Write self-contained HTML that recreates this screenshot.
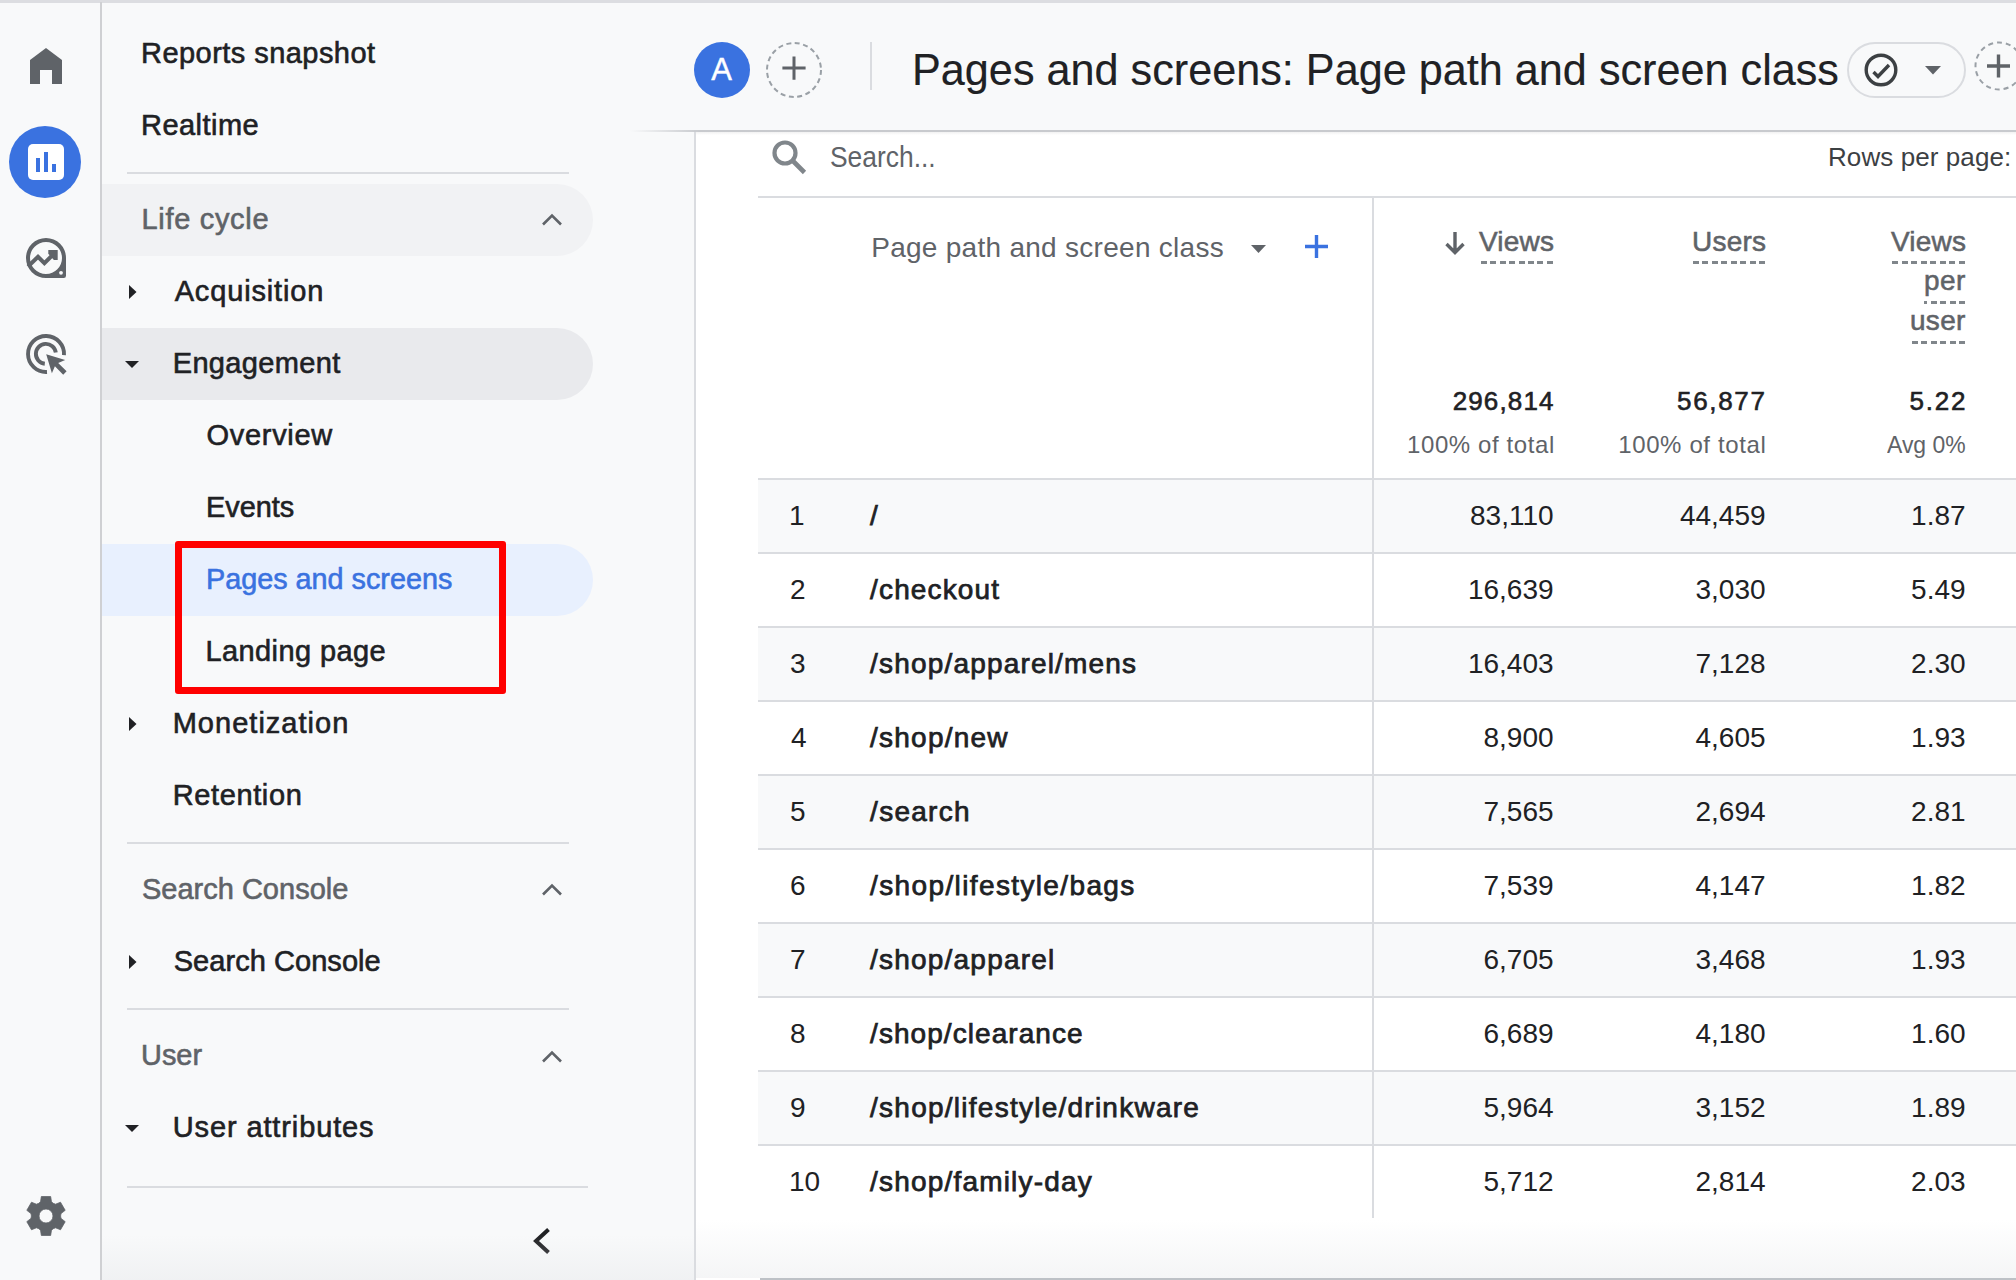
<!DOCTYPE html>
<html><head><meta charset="utf-8"><style>
html,body{margin:0;padding:0;width:2016px;height:1280px;overflow:hidden;background:#f8f9fa;}
.t{position:absolute;white-space:nowrap;font-family:"Liberation Sans", sans-serif;}
.b{position:absolute;}
</style></head><body>
<div class="b" style="left:0px;top:0px;width:2016px;height:1280px;background:#f8f9fa"></div>
<div class="b" style="left:696px;top:131px;width:1320px;height:1149px;background:#fff"></div>
<div class="b" style="left:694px;top:131px;width:2px;height:1149px;background:#dadce0"></div>
<div class="b" style="left:630px;top:130px;width:1386px;height:2px;background:linear-gradient(90deg,rgba(200,202,206,0) 0px,rgba(200,202,206,1) 70px)"></div>
<div class="b" style="left:696px;top:132px;width:1320px;height:3px;background:linear-gradient(180deg,rgba(60,64,67,0.07),rgba(60,64,67,0))"></div>
<div class="b" style="left:0px;top:0px;width:2016px;height:2.5px;background:#dcdde1"></div>
<div class="b" style="left:100px;top:2px;width:2px;height:1278px;background:#cfd0d3"></div>
<div class="b" style="left:102px;top:184px;width:491px;height:72px;background:#f1f2f4;border-radius:0 36px 36px 0"></div>
<div class="b" style="left:102px;top:328px;width:491px;height:72px;background:#e9eaed;border-radius:0 36px 36px 0"></div>
<div class="b" style="left:102px;top:544px;width:491px;height:72px;background:#e8f0fe;border-radius:0 36px 36px 0"></div>
<div class="b" style="left:127px;top:172px;width:442px;height:2px;background:#dadce0"></div>
<div class="b" style="left:127px;top:842px;width:442px;height:2px;background:#dadce0"></div>
<div class="b" style="left:127px;top:1008px;width:442px;height:2px;background:#dadce0"></div>
<div class="b" style="left:127px;top:1186px;width:461px;height:2px;background:#dadce0"></div>
<div class="t" style="left:141.00px;top:35.33px;font-size:29px;line-height:36.25px;font-weight:400;color:#202124;letter-spacing:0.451px;-webkit-text-stroke:0.6px #202124;">Reports snapshot</div>
<div class="t" style="left:141.00px;top:107.33px;font-size:29px;line-height:36.25px;font-weight:400;color:#202124;letter-spacing:0.471px;-webkit-text-stroke:0.6px #202124;">Realtime</div>
<div class="t" style="left:141.50px;top:200.83px;font-size:29px;line-height:36.25px;font-weight:400;color:#5f6368;letter-spacing:0.683px;-webkit-text-stroke:0.6px #5f6368;">Life cycle</div>
<div class="t" style="left:174.70px;top:272.83px;font-size:29px;line-height:36.25px;font-weight:400;color:#202124;letter-spacing:0.839px;-webkit-text-stroke:0.6px #202124;">Acquisition</div>
<div class="t" style="left:172.70px;top:344.83px;font-size:29px;line-height:36.25px;font-weight:400;color:#202124;letter-spacing:0.356px;-webkit-text-stroke:0.6px #202124;">Engagement</div>
<div class="t" style="left:206.60px;top:416.83px;font-size:29px;line-height:36.25px;font-weight:400;color:#202124;letter-spacing:0.684px;-webkit-text-stroke:0.6px #202124;">Overview</div>
<div class="t" style="left:205.61px;top:488.83px;font-size:29px;line-height:36.25px;font-weight:400;color:#202124;-webkit-text-stroke:0.6px #202124;transform:scaleX(0.9959);transform-origin:0 0;">Events</div>
<div class="t" style="left:205.62px;top:560.83px;font-size:29px;line-height:36.25px;font-weight:400;color:#3a72e0;-webkit-text-stroke:0.6px #3a72e0;transform:scaleX(0.9920);transform-origin:0 0;">Pages and screens</div>
<div class="t" style="left:205.60px;top:632.83px;font-size:29px;line-height:36.25px;font-weight:400;color:#202124;letter-spacing:0.377px;-webkit-text-stroke:0.6px #202124;">Landing page</div>
<div class="t" style="left:172.70px;top:704.83px;font-size:29px;line-height:36.25px;font-weight:400;color:#202124;letter-spacing:1.018px;-webkit-text-stroke:0.6px #202124;">Monetization</div>
<div class="t" style="left:172.70px;top:776.83px;font-size:29px;line-height:36.25px;font-weight:400;color:#202124;letter-spacing:0.623px;-webkit-text-stroke:0.6px #202124;">Retention</div>
<div class="t" style="left:142.00px;top:870.83px;font-size:29px;line-height:36.25px;font-weight:400;color:#5f6368;-webkit-text-stroke:0.6px #5f6368;transform:scaleX(0.9999);transform-origin:0 0;">Search Console</div>
<div class="t" style="left:173.70px;top:942.83px;font-size:29px;line-height:36.25px;font-weight:400;color:#202124;letter-spacing:0.053px;-webkit-text-stroke:0.6px #202124;">Search Console</div>
<div class="t" style="left:141.01px;top:1036.83px;font-size:29px;line-height:36.25px;font-weight:400;color:#5f6368;-webkit-text-stroke:0.6px #5f6368;transform:scaleX(0.9971);transform-origin:0 0;">User</div>
<div class="t" style="left:172.70px;top:1108.83px;font-size:29px;line-height:36.25px;font-weight:400;color:#202124;letter-spacing:0.881px;-webkit-text-stroke:0.6px #202124;">User attributes</div>
<svg class="b" style="left:129px;top:285px" width="8" height="14" viewBox="0 0 8 14"><path d="M0 0L7.5 7L0 14Z" fill="#202124"/></svg>
<svg class="b" style="left:125px;top:361px" width="14" height="7" viewBox="0 0 14 7"><path d="M0 0L14 0L7.0 7Z" fill="#202124"/></svg>
<svg class="b" style="left:129px;top:717px" width="8" height="14" viewBox="0 0 8 14"><path d="M0 0L7.5 7L0 14Z" fill="#202124"/></svg>
<svg class="b" style="left:129px;top:955px" width="8" height="14" viewBox="0 0 8 14"><path d="M0 0L7.5 7L0 14Z" fill="#202124"/></svg>
<svg class="b" style="left:125px;top:1125px" width="14" height="7" viewBox="0 0 14 7"><path d="M0 0L14 0L7.0 7Z" fill="#202124"/></svg>
<svg class="b" style="left:541px;top:212px" width="22" height="14" viewBox="0 0 22 14"><path d="M2 12.5L11 3.5L20 12.5" fill="none" stroke="#5f6368" stroke-width="2.6"/></svg>
<svg class="b" style="left:541px;top:882px" width="22" height="14" viewBox="0 0 22 14"><path d="M2 12.5L11 3.5L20 12.5" fill="none" stroke="#5f6368" stroke-width="2.6"/></svg>
<svg class="b" style="left:541px;top:1049px" width="22" height="14" viewBox="0 0 22 14"><path d="M2 12.5L11 3.5L20 12.5" fill="none" stroke="#5f6368" stroke-width="2.6"/></svg>
<svg class="b" style="left:530px;top:1225px" width="24" height="32" viewBox="0 0 24 32"><path d="M18.5 4.5L6 16L18.5 27.5" fill="none" stroke="#202124" stroke-width="4"/></svg>
<div class="b" style="left:175px;top:541px;width:331px;height:153px;border:7px solid #f00;box-sizing:border-box;border-radius:3px"></div>
<svg class="b" style="left:30px;top:48px" width="32" height="36" viewBox="0 0 32 36"><path d="M16 0L32 12V36H22V22H10V36H0V12Z" fill="#5f6368"/></svg>
<div class="b" style="left:9px;top:126px;width:72px;height:72px;border-radius:50%;background:#3a72e0"></div>
<div class="b" style="left:28px;top:144px;width:36px;height:36px;background:#fff;border-radius:5px"></div>
<div class="b" style="left:36px;top:158px;width:4px;height:13.5px;background:#3a72e0"></div>
<div class="b" style="left:44px;top:152px;width:4px;height:19.5px;background:#3a72e0"></div>
<div class="b" style="left:52px;top:164px;width:4px;height:7.5px;background:#3a72e0"></div>
<svg class="b" style="left:16px;top:228px" width="60" height="60" viewBox="0 0 60 60">
<path fill-rule="evenodd" d="M30 10A20 20 0 1 0 30 50H47.8A2.2 2.2 0 0 0 50 47.8V30A20 20 0 0 0 30 10ZM30 14A16 16 0 1 1 30 46A16 16 0 1 1 30 14Z" fill="#5f6368"/>
<circle cx="45" cy="44.8" r="1.9" fill="#f8f9fa"/>
<path d="M12 38.5L22 28.8L28.4 35.2L38.6 25" fill="none" stroke="#5f6368" stroke-width="4" stroke-linejoin="miter"/>
<path d="M32.3 22H41.7V31.9H37.9L32.3 25.7Z" fill="#5f6368"/>
</svg>
<svg class="b" style="left:16px;top:324px" width="60" height="60" viewBox="0 0 60 60">
<path d="M31 48A18 18 0 1 1 48 31.2" fill="none" stroke="#5f6368" stroke-width="3.9"/>
<path d="M28.8 39.8A10 10 0 1 1 39.8 28.6" fill="none" stroke="#5f6368" stroke-width="3.9"/>
<path d="M30.2 30.2L49.2 35.9L42.2 38.9L50.6 47.3L47.2 50.7L38.9 42.2L35.9 49.2Z" fill="#5f6368"/>
</svg>
<svg class="b" style="left:26px;top:1196px" width="40" height="40" viewBox="0 0 40 40">
<path fill-rule="evenodd" stroke="#5f6368" stroke-width="0.8" stroke-linejoin="round" d="M12.70 7.36 L14.55 5.81 L15.33 0.55 L24.67 0.55 L25.45 5.81 L27.30 7.36 L29.57 8.19 L34.51 6.23 L39.18 14.32 L35.01 17.62 L34.60 20.00 L35.01 22.38 L39.18 25.68 L34.51 33.77 L29.57 31.81 L27.30 32.64 L25.45 34.19 L24.67 39.45 L15.33 39.45 L14.55 34.19 L12.70 32.64 L10.43 31.81 L5.49 33.77 L0.82 25.68 L4.99 22.38 L5.40 20.00 L4.99 17.62 L0.82 14.32 L5.49 6.23 L10.43 8.19Z M27 20A7 7 0 1 0 13 20A7 7 0 1 0 27 20Z" fill="#5f6368"/>
</svg>
<div class="b" style="left:694px;top:42px;width:56px;height:56px;border-radius:50%;background:#3a72e0"></div>
<div class="t" style="left:711.30px;top:50.88px;font-size:31px;line-height:38.75px;font-weight:400;color:#fff;-webkit-text-stroke:0.4px #fff;">A</div>
<svg class="b" style="left:765px;top:41px" width="58" height="58" viewBox="0 0 58 58">
<circle cx="29" cy="29" r="27" fill="none" stroke="#9aa0a6" stroke-width="2" stroke-dasharray="5 3.5"/>
<path d="M29 15.5V38.7M17.4 27H40.6" stroke="#5f6368" stroke-width="3"/></svg>
<div class="b" style="left:870px;top:42px;width:2px;height:48px;background:#dadce0"></div>
<div class="t" style="left:911.55px;top:42.25px;font-size:44px;line-height:55.0px;font-weight:400;color:#202124;-webkit-text-stroke:0.15px #202124;transform:scaleX(0.9818);transform-origin:0 0;">Pages and screens: Page path and screen class</div>
<div class="b" style="left:1847px;top:42px;width:119px;height:56px;border:2px solid #dadce0;border-radius:28px;box-sizing:border-box"></div>
<svg class="b" style="left:1862px;top:51px" width="38" height="38" viewBox="0 0 38 38">
<circle cx="19" cy="19" r="14.8" fill="none" stroke="#3c4043" stroke-width="3.4"/>
<path d="M11.5 21L16 25.5L27 14" fill="none" stroke="#3c4043" stroke-width="3.4"/></svg>
<svg class="b" style="left:1925px;top:66px" width="16" height="8.5" viewBox="0 0 16 8.5"><path d="M0 0L16 0L8.0 8.5Z" fill="#5f6368"/></svg>
<svg class="b" style="left:1974px;top:41px" width="50" height="50" viewBox="0 0 50 50">
<circle cx="25" cy="25" r="23.5" fill="none" stroke="#9aa0a6" stroke-width="2" stroke-dasharray="5 4"/>
<path d="M24.5 13.5V36.5M13 25H36" stroke="#5f6368" stroke-width="3.4"/></svg>
<svg class="b" style="left:770px;top:138px" width="38" height="38" viewBox="0 0 38 38">
<circle cx="15" cy="15" r="10.5" fill="none" stroke="#80868b" stroke-width="4.2"/>
<path d="M22.5 22.5L34.5 34.5" stroke="#80868b" stroke-width="4.6"/></svg>
<div class="t" style="left:830.19px;top:138.83px;font-size:29px;line-height:36.25px;font-weight:400;color:#5f6368;transform:scaleX(0.9106);transform-origin:0 0;">Search...</div>
<div class="t" style="left:1828.00px;top:140.54px;font-size:26px;line-height:32.5px;font-weight:400;color:#3c4043;letter-spacing:0.086px;">Rows per page:</div>
<div class="b" style="left:758px;top:196px;width:1258px;height:2px;background:#dadce0"></div>
<div class="b" style="left:758px;top:480px;width:1258px;height:72px;background:#f8f9fa"></div>
<div class="b" style="left:758px;top:478px;width:1258px;height:2px;background:#dadce0"></div>
<div class="b" style="left:758px;top:552px;width:1258px;height:2px;background:#dadce0"></div>
<div class="b" style="left:758px;top:628px;width:1258px;height:72px;background:#f8f9fa"></div>
<div class="b" style="left:758px;top:626px;width:1258px;height:2px;background:#dadce0"></div>
<div class="b" style="left:758px;top:700px;width:1258px;height:2px;background:#dadce0"></div>
<div class="b" style="left:758px;top:776px;width:1258px;height:72px;background:#f8f9fa"></div>
<div class="b" style="left:758px;top:774px;width:1258px;height:2px;background:#dadce0"></div>
<div class="b" style="left:758px;top:848px;width:1258px;height:2px;background:#dadce0"></div>
<div class="b" style="left:758px;top:924px;width:1258px;height:72px;background:#f8f9fa"></div>
<div class="b" style="left:758px;top:922px;width:1258px;height:2px;background:#dadce0"></div>
<div class="b" style="left:758px;top:996px;width:1258px;height:2px;background:#dadce0"></div>
<div class="b" style="left:758px;top:1072px;width:1258px;height:72px;background:#f8f9fa"></div>
<div class="b" style="left:758px;top:1070px;width:1258px;height:2px;background:#dadce0"></div>
<div class="b" style="left:758px;top:1144px;width:1258px;height:2px;background:#dadce0"></div>
<div class="b" style="left:1372px;top:197px;width:2px;height:1021px;background:#dadce0"></div>
<div class="t" style="left:871.20px;top:229.80px;font-size:28px;line-height:35.0px;font-weight:400;color:#5f6368;letter-spacing:0.278px;">Page path and screen class</div>
<svg class="b" style="left:1251px;top:245px" width="15" height="8" viewBox="0 0 15 8"><path d="M0 0L15 0L7.5 8Z" fill="#5f6368"/></svg>
<svg class="b" style="left:1305px;top:234.5px" width="23" height="23" viewBox="0 0 23 23"><path d="M11.5 0V23M0 11.5H23" stroke="#3a72e0" stroke-width="3.4"/></svg>
<svg class="b" style="left:1444px;top:231px" width="22" height="24" viewBox="0 0 22 24"><path d="M11 1V21M2.5 13L11 21.5L19.5 13" fill="none" stroke="#5f6368" stroke-width="3.4"/></svg>
<div class="t" style="left:1479.00px;top:223.50px;font-size:28px;line-height:35.0px;font-weight:400;color:#5f6368;letter-spacing:0.204px;-webkit-text-stroke:0.55px #5f6368;">Views</div>
<div class="b" style="left:1478px;top:261.2px;width:75px;height:3px;background:repeating-linear-gradient(270deg,#80868b 0 6px,transparent 6px 9.5px)"></div>
<div class="t" style="left:1692.00px;top:223.50px;font-size:28px;line-height:35.0px;font-weight:400;color:#5f6368;letter-spacing:0.221px;-webkit-text-stroke:0.55px #5f6368;">Users</div>
<div class="b" style="left:1693px;top:261.2px;width:72px;height:3px;background:repeating-linear-gradient(270deg,#80868b 0 6px,transparent 6px 9.5px)"></div>
<div class="t" style="left:1891.00px;top:223.50px;font-size:28px;line-height:35.0px;font-weight:400;color:#5f6368;letter-spacing:0.204px;-webkit-text-stroke:0.55px #5f6368;">Views</div>
<div class="b" style="left:1890px;top:261.2px;width:75px;height:3px;background:repeating-linear-gradient(270deg,#80868b 0 6px,transparent 6px 9.5px)"></div>
<div class="t" style="left:1924.00px;top:263.30px;font-size:28px;line-height:35.0px;font-weight:400;color:#5f6368;letter-spacing:0.428px;-webkit-text-stroke:0.55px #5f6368;">per</div>
<div class="b" style="left:1924px;top:301.0px;width:41px;height:3px;background:repeating-linear-gradient(270deg,#80868b 0 6px,transparent 6px 9.5px)"></div>
<div class="t" style="left:1910.00px;top:303.30px;font-size:28px;line-height:35.0px;font-weight:400;color:#5f6368;letter-spacing:0.285px;-webkit-text-stroke:0.55px #5f6368;">user</div>
<div class="b" style="left:1910px;top:341.0px;width:55px;height:3px;background:repeating-linear-gradient(270deg,#80868b 0 6px,transparent 6px 9.5px)"></div>
<div class="t" style="left:1452.70px;top:385.14px;font-size:26px;line-height:32.5px;font-weight:400;color:#202124;letter-spacing:1.129px;-webkit-text-stroke:0.6px #202124;">296,814</div>
<div class="t" style="left:1677.00px;top:385.14px;font-size:26px;line-height:32.5px;font-weight:400;color:#202124;letter-spacing:1.687px;-webkit-text-stroke:0.6px #202124;">56,877</div>
<div class="t" style="left:1909.60px;top:385.14px;font-size:26px;line-height:32.5px;font-weight:400;color:#202124;letter-spacing:1.752px;-webkit-text-stroke:0.6px #202124;">5.22</div>
<div class="t" style="left:1407.00px;top:430.38px;font-size:24px;line-height:30.0px;font-weight:400;color:#5f6368;letter-spacing:0.603px;">100% of total</div>
<div class="t" style="left:1618.20px;top:430.38px;font-size:24px;line-height:30.0px;font-weight:400;color:#5f6368;letter-spacing:0.628px;">100% of total</div>
<div class="t" style="left:1886.70px;top:430.38px;font-size:24px;line-height:30.0px;font-weight:400;color:#5f6368;transform:scaleX(0.9556);transform-origin:0 0;">Avg 0%</div>
<div class="t" style="left:789.00px;top:497.80px;font-size:28px;line-height:35.0px;font-weight:400;color:#202124;">1</div>
<div class="t" style="left:870.10px;top:497.80px;font-size:28px;line-height:35.0px;font-weight:400;color:#202124;-webkit-text-stroke:0.75px #202124;">/</div>
<div class="t" style="left:1470.01px;top:497.80px;font-size:28px;line-height:35.0px;font-weight:400;color:#202124;">83,110</div>
<div class="t" style="left:1679.93px;top:497.80px;font-size:28px;line-height:35.0px;font-weight:400;color:#202124;">44,459</div>
<div class="t" style="left:1911.08px;top:497.80px;font-size:28px;line-height:35.0px;font-weight:400;color:#202124;">1.87</div>
<div class="t" style="left:790.00px;top:571.80px;font-size:28px;line-height:35.0px;font-weight:400;color:#202124;">2</div>
<div class="t" style="left:870.10px;top:571.80px;font-size:28px;line-height:35.0px;font-weight:400;color:#202124;letter-spacing:1.141px;-webkit-text-stroke:0.75px #202124;">/checkout</div>
<div class="t" style="left:1467.93px;top:571.80px;font-size:28px;line-height:35.0px;font-weight:400;color:#202124;">16,639</div>
<div class="t" style="left:1695.50px;top:571.80px;font-size:28px;line-height:35.0px;font-weight:400;color:#202124;">3,030</div>
<div class="t" style="left:1911.08px;top:571.80px;font-size:28px;line-height:35.0px;font-weight:400;color:#202124;">5.49</div>
<div class="t" style="left:790.00px;top:645.80px;font-size:28px;line-height:35.0px;font-weight:400;color:#202124;">3</div>
<div class="t" style="left:870.10px;top:645.80px;font-size:28px;line-height:35.0px;font-weight:400;color:#202124;letter-spacing:1.175px;-webkit-text-stroke:0.75px #202124;">/shop/apparel/mens</div>
<div class="t" style="left:1467.93px;top:645.80px;font-size:28px;line-height:35.0px;font-weight:400;color:#202124;">16,403</div>
<div class="t" style="left:1695.50px;top:645.80px;font-size:28px;line-height:35.0px;font-weight:400;color:#202124;">7,128</div>
<div class="t" style="left:1911.08px;top:645.80px;font-size:28px;line-height:35.0px;font-weight:400;color:#202124;">2.30</div>
<div class="t" style="left:791.00px;top:719.80px;font-size:28px;line-height:35.0px;font-weight:400;color:#202124;">4</div>
<div class="t" style="left:870.10px;top:719.80px;font-size:28px;line-height:35.0px;font-weight:400;color:#202124;letter-spacing:1.223px;-webkit-text-stroke:0.75px #202124;">/shop/new</div>
<div class="t" style="left:1483.50px;top:719.80px;font-size:28px;line-height:35.0px;font-weight:400;color:#202124;">8,900</div>
<div class="t" style="left:1695.50px;top:719.80px;font-size:28px;line-height:35.0px;font-weight:400;color:#202124;">4,605</div>
<div class="t" style="left:1911.08px;top:719.80px;font-size:28px;line-height:35.0px;font-weight:400;color:#202124;">1.93</div>
<div class="t" style="left:790.00px;top:793.80px;font-size:28px;line-height:35.0px;font-weight:400;color:#202124;">5</div>
<div class="t" style="left:870.10px;top:793.80px;font-size:28px;line-height:35.0px;font-weight:400;color:#202124;letter-spacing:1.275px;-webkit-text-stroke:0.75px #202124;">/search</div>
<div class="t" style="left:1483.50px;top:793.80px;font-size:28px;line-height:35.0px;font-weight:400;color:#202124;">7,565</div>
<div class="t" style="left:1695.50px;top:793.80px;font-size:28px;line-height:35.0px;font-weight:400;color:#202124;">2,694</div>
<div class="t" style="left:1911.08px;top:793.80px;font-size:28px;line-height:35.0px;font-weight:400;color:#202124;">2.81</div>
<div class="t" style="left:790.00px;top:867.80px;font-size:28px;line-height:35.0px;font-weight:400;color:#202124;">6</div>
<div class="t" style="left:870.10px;top:867.80px;font-size:28px;line-height:35.0px;font-weight:400;color:#202124;letter-spacing:1.372px;-webkit-text-stroke:0.75px #202124;">/shop/lifestyle/bags</div>
<div class="t" style="left:1483.50px;top:867.80px;font-size:28px;line-height:35.0px;font-weight:400;color:#202124;">7,539</div>
<div class="t" style="left:1695.50px;top:867.80px;font-size:28px;line-height:35.0px;font-weight:400;color:#202124;">4,147</div>
<div class="t" style="left:1911.08px;top:867.80px;font-size:28px;line-height:35.0px;font-weight:400;color:#202124;">1.82</div>
<div class="t" style="left:790.00px;top:941.80px;font-size:28px;line-height:35.0px;font-weight:400;color:#202124;">7</div>
<div class="t" style="left:870.10px;top:941.80px;font-size:28px;line-height:35.0px;font-weight:400;color:#202124;letter-spacing:1.203px;-webkit-text-stroke:0.75px #202124;">/shop/apparel</div>
<div class="t" style="left:1483.50px;top:941.80px;font-size:28px;line-height:35.0px;font-weight:400;color:#202124;">6,705</div>
<div class="t" style="left:1695.50px;top:941.80px;font-size:28px;line-height:35.0px;font-weight:400;color:#202124;">3,468</div>
<div class="t" style="left:1911.08px;top:941.80px;font-size:28px;line-height:35.0px;font-weight:400;color:#202124;">1.93</div>
<div class="t" style="left:790.00px;top:1015.80px;font-size:28px;line-height:35.0px;font-weight:400;color:#202124;">8</div>
<div class="t" style="left:870.10px;top:1015.80px;font-size:28px;line-height:35.0px;font-weight:400;color:#202124;letter-spacing:1.056px;-webkit-text-stroke:0.75px #202124;">/shop/clearance</div>
<div class="t" style="left:1483.50px;top:1015.80px;font-size:28px;line-height:35.0px;font-weight:400;color:#202124;">6,689</div>
<div class="t" style="left:1695.50px;top:1015.80px;font-size:28px;line-height:35.0px;font-weight:400;color:#202124;">4,180</div>
<div class="t" style="left:1911.08px;top:1015.80px;font-size:28px;line-height:35.0px;font-weight:400;color:#202124;">1.60</div>
<div class="t" style="left:790.00px;top:1089.80px;font-size:28px;line-height:35.0px;font-weight:400;color:#202124;">9</div>
<div class="t" style="left:870.10px;top:1089.80px;font-size:28px;line-height:35.0px;font-weight:400;color:#202124;letter-spacing:1.249px;-webkit-text-stroke:0.75px #202124;">/shop/lifestyle/drinkware</div>
<div class="t" style="left:1483.50px;top:1089.80px;font-size:28px;line-height:35.0px;font-weight:400;color:#202124;">5,964</div>
<div class="t" style="left:1695.50px;top:1089.80px;font-size:28px;line-height:35.0px;font-weight:400;color:#202124;">3,152</div>
<div class="t" style="left:1911.08px;top:1089.80px;font-size:28px;line-height:35.0px;font-weight:400;color:#202124;">1.89</div>
<div class="t" style="left:789.00px;top:1163.80px;font-size:28px;line-height:35.0px;font-weight:400;color:#202124;">10</div>
<div class="t" style="left:870.10px;top:1163.80px;font-size:28px;line-height:35.0px;font-weight:400;color:#202124;letter-spacing:1.183px;-webkit-text-stroke:0.75px #202124;">/shop/family-day</div>
<div class="t" style="left:1483.50px;top:1163.80px;font-size:28px;line-height:35.0px;font-weight:400;color:#202124;">5,712</div>
<div class="t" style="left:1695.50px;top:1163.80px;font-size:28px;line-height:35.0px;font-weight:400;color:#202124;">2,814</div>
<div class="t" style="left:1911.08px;top:1163.80px;font-size:28px;line-height:35.0px;font-weight:400;color:#202124;">2.03</div>
<div class="b" style="left:102px;top:1235px;width:592px;height:45px;background:linear-gradient(180deg,rgba(225,227,230,0),rgba(225,227,230,0.35))"></div>
<div class="b" style="left:696px;top:1220px;width:1320px;height:58px;background:linear-gradient(180deg,rgba(225,227,230,0),rgba(225,227,230,0.35))"></div>
<div class="b" style="left:760px;top:1278px;width:1256px;height:2px;background:#bdc1c6"></div>
</body></html>
